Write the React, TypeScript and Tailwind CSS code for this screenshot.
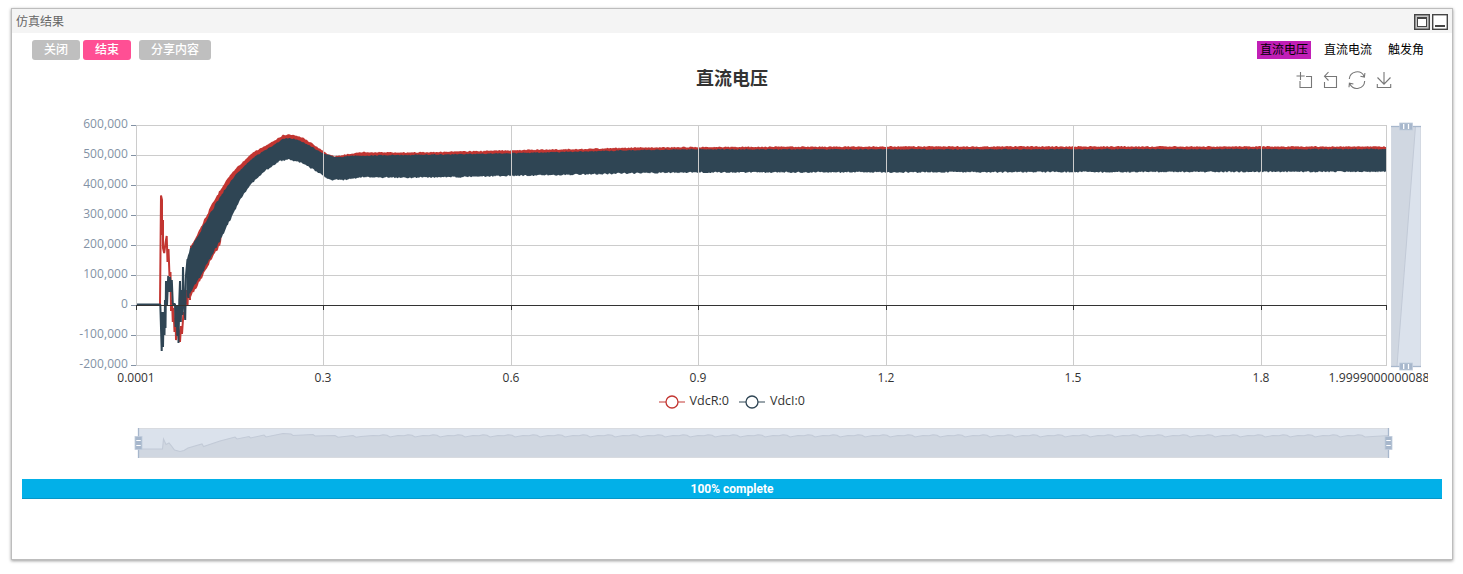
import React from "react";

type Point = [number, number];

const FONT = "font-['Open_Sans','Noto_Sans_CJK_SC',sans-serif]";

const redTop: Point[] = [
  [190, 247], [195.7, 237], [210.7, 207], [221.7, 187], [229.3, 176], [236.7, 167.5], [253.3, 152.3],
  [273.3, 141.5], [283, 135], [290, 134.3], [303, 137.5], [316.7, 146.5], [326.7, 153.5], [335, 156.5],
  [346.7, 154.3], [363, 152], [403, 152.5], [460, 151.5], [520, 150], [580, 149], [640, 147.5],
  [700, 147], [900, 146.5], [1386, 146.5],
];
const darkTop: Point[] = [
  [187, 259], [190, 249], [193.3, 244], [201.7, 229], [216.7, 202], [229.3, 183], [236.7, 173.5],
  [253.3, 157.7], [283, 139], [290, 138], [300, 140.3], [313, 147.5], [323, 153.5], [336.7, 157.3],
  [353, 155.7], [460, 154.2], [520, 153], [580, 151.5], [640, 150], [700, 149.3], [1386, 149],
];
const darkBottom: Point[] = [
  [187, 297], [191.7, 291], [200, 277], [211.7, 255], [220, 241], [229.3, 222], [240, 200], [250, 185],
  [263, 172.5], [280, 161], [290, 159.7], [303, 163], [320, 174], [330, 180], [343, 180], [363, 177.3],
  [403, 177.6], [460, 177], [520, 175.7], [580, 174.5], [640, 173], [700, 172.4], [1386, 171.7],
];

function sample(points: Point[], x: number): number {
  if (x <= points[0][0]) return points[0][1];
  for (let i = 1; i < points.length; i++) {
    const [x1, y1] = points[i];
    if (x <= x1) {
      const [x0, y0] = points[i - 1];
      return y0 + ((x - x0) / (x1 - x0)) * (y1 - y0);
    }
  }
  return points[points.length - 1][1];
}

function ripple(x: number, seed: number): number {
  const v = Math.sin(x * 12.9898 + seed * 78.233) * 43758.5453;
  return v - Math.floor(v) - 0.5;
}

function band(top: Point[], bottom: Point[], from: number, early: number, late: number, seed: number): string {
  const upper: string[] = [];
  const lower: string[] = [];
  for (let x = from; x <= 1386; x += 1) {
    const amp = x < 230 ? 2.4 : 1.1;
    upper.push(`${x},${(sample(top, x) + ripple(x, seed) * amp).toFixed(2)}`);
    const extra = x < 222 ? early : late;
    lower.unshift(`${x},${(sample(bottom, x) + extra + ripple(x, seed + 3) * (amp + 0.4)).toFixed(2)}`);
  }
  return [...upper, ...lower].join(" ");
}

const redBand = band(redTop, darkBottom, 190, 4, -3, 1);
const darkBand = band(darkTop, darkBottom, 187, 0, 0, 2);

function overview(): string {
  const pts = [
    "138,449", "162.5,449", "163.5,439", "166,444.5", "169,443", "171.5,446", "174.5,450", "180,451.5",
    "184,450.5", "188,448", "202,444", "203.5,446.5", "220,441", "235,437", "237,439", "249,436.5",
    "250.5,438", "264,435", "266,437", "283,433.5", "291,434", "293,435.5", "313,434.5", "315,436",
    "335,435.5", "338,437.3", "353,435.5", "356,437.2", "361,436.5",
  ];
  for (let x = 365; x + 25 < 1389; x += 25) {
    pts.push(`${x + 8},435.5`, `${x + 14},435.8`, `${x + 18},434.8`, `${x + 22},435.2`, `${x + 25},437`);
  }
  pts.push("1389,435.5");
  return pts.join(" ");
}
const overviewLine = overview();

const yLabels = ["600,000", "500,000", "400,000", "300,000", "200,000", "100,000", "0", "-100,000", "-200,000"];
const xTicks: { x: number; label: string }[] = [
  { x: 136.5, label: "0.0001" }, { x: 323.5, label: "0.3" }, { x: 511.5, label: "0.6" },
  { x: 698.5, label: "0.9" }, { x: 886.5, label: "1.2" }, { x: 1073.5, label: "1.5" },
  { x: 1261.5, label: "1.8" }, { x: 1386.5, label: "" },
];

function SideHandle({ x }: { x: number }) {
  return (
    <g>
      <path d={`M${x} 428V458`} stroke="#a7b7cc" strokeWidth="1.3" />
      <rect x={x - 3.5} y="436.5" width="7" height="13" fill="#a7b7cc" stroke="#c1cddd" strokeWidth="0.8" />
      <path d={`M${x - 2.2} 440.5h4.4M${x - 2.2} 445.5h4.4`} stroke="#fff" strokeWidth="1.2" />
    </g>
  );
}

function EndHandle({ y }: { y: number }) {
  return (
    <g>
      <path d={`M1391 ${y}H1421`} stroke="#a7b7cc" strokeWidth="1.3" />
      <rect x="1399.7" y={y - 3.5} width="12.8" height="7" fill="#a7b7cc" stroke="#c1cddd" strokeWidth="0.8" />
      <path d={`M1403.7 ${y - 2.5}v5M1408.5 ${y - 2.5}v5`} stroke="#fff" strokeWidth="1.3" />
    </g>
  );
}

function LegendMark({ x, color }: { x: number; color: string }) {
  return (
    <g stroke={color} fill="#fff">
      <path d={`M${x - 13} 402H${x + 13}`} strokeWidth="1.3" opacity="0.75" />
      <circle cx={x} cy="402" r="6" strokeWidth="1.3" />
    </g>
  );
}

function Chart() {
  return (
    <svg viewBox="36 60 1392 410" width="1392" height="410" className={`block ${FONT} text-[12px]`}>
      <text x="732" y="84.5" textAnchor="middle" fontSize="18" fontWeight="700" fill="#333">直流电压</text>

      <g fill="none" stroke="#777" strokeWidth="1.1">
        <path d="M1300.5 72v8M1296.5 76h8.2M1306 76.5h5.5v11h-11.5v-6.5" />
        <path d="M1328.5 72l-4 4.3 4 4.2M1324.5 76.5h12v11h-12v-5.5" />
        <path d="M1349.3 79a7.8 7.8 0 0 1 14.8-2.8M1364.7 81a7.8 7.8 0 0 1-14.8 3M1364.9 73l-.5 4-4-.7M1349 87.3l.4-4.2 4 .9" />
        <path d="M1384 72v12.2M1377.5 77.5l6.5 6.7 6.5-6.7M1377.3 84v3.5h13.4V84" />
      </g>

      <g stroke="#ccc" strokeWidth="1" shapeRendering="crispEdges">
        {yLabels.map((l, i) => (
          <path key={l} d={`M136 ${125.5 + i * 30}H1387`} />
        ))}
      </g>
      <g shapeRendering="crispEdges">
        {yLabels.map((l, i) => (
          <path key={l} d={`M131 ${125.5 + i * 30}h5`} stroke="#8392a5" />
        ))}
      </g>
      <g fill="#8392a5" textAnchor="end">
        {yLabels.map((l, i) => (
          <text key={l} x="128" y={128.3 + i * 30} className="tracking-[0.08px]">{l}</text>
        ))}
      </g>

      <g fill="none" stroke="#c23531" strokeWidth="2" strokeLinejoin="bevel">
        <path d="M137 305H160L161 195.5 162 200 162 235 163 220 163 248 164.2 253 165.5 243 166.7 236 167.5 262 168.5 249 169.5 276 170.5 272 171 311 172 300 172.8 322 173.5 308 174.5 332 175.5 318 176 340 178 325 180 342 181 326 182 334 183.5 312 184.5 318 186 290 187.5 306 189 262 190 300" />
      </g>
      <polygon points={redBand} fill="#c23531" />
      <path
        d="M137 304.5H160.3L161.7 351 162.2 312 163 347 163.7 312 164.5 335 165 300 165.5 328 166 281 167 306 168.2 276 169.3 292 170 277 171 292 171.8 280 172.8 304 175 304 175.6 327 176.5 306 177.3 336 178 306 178.5 343 179.3 300 180 281 180.8 322 181.6 290 182.4 315 183 267 184 300 185.2 320 186 275 187.5 259 188.5 298"
        fill="none" stroke="#2f4554" strokeWidth="2" strokeLinejoin="bevel"
      />
      <polygon points={darkBand} fill="#2f4554" />

      <g stroke="#ccc" strokeWidth="1" shapeRendering="crispEdges">
        {xTicks.map((t) => (
          <path key={t.x} d={`M${t.x} 125V366`} />
        ))}
      </g>
      <g stroke="#333" strokeWidth="1" shapeRendering="crispEdges">
        <path d="M136 305.5H1387" />
        {xTicks.map((t) => (
          <path key={t.x} d={`M${t.x} 305v5`} />
        ))}
      </g>
      <g fill="#333" textAnchor="middle">
        {xTicks.map((t) => (
          <text key={t.x} x={t.x - 0.5} y="382">{t.label}</text>
        ))}
      </g>
      <text x="1328.5" y="382" fill="#333" textLength="101" lengthAdjust="spacingAndGlyphs">1.9999000000088</text>

      <rect x="1391" y="126" width="30" height="240" fill="#dbe2ec" />
      <path d="M1391 126H1415.5L1397 366H1391Z" fill="#d0d7e1" />
      <path d="M1415.5 126L1397 366" stroke="#c2cad7" strokeWidth="1" />
      <path d="M1391.5 126V366M1420.5 126V366" stroke="#d3d9e2" />
      <EndHandle y={126.5} />
      <EndHandle y={366.5} />

      <LegendMark x={672} color="#c23531" />
      <text x="689.5" y="405" fill="#333" textLength="39.5" lengthAdjust="spacingAndGlyphs">VdcR:0</text>
      <LegendMark x={752} color="#2f4554" />
      <text x="770" y="405" fill="#333" textLength="35" lengthAdjust="spacingAndGlyphs">VdcI:0</text>

      <rect x="138" y="428" width="1251" height="30" fill="#dbe2ec" />
      <polygon points={`138,458 ${overviewLine} 1389,458`} fill="#d0d7e1" />
      <polyline points={overviewLine} fill="none" stroke="#c2cad7" strokeWidth="1.1" />
      <path d="M138 428.5H1389M138 457.5H1389" stroke="#d8dbe0" />
      <SideHandle x={138.5} />
      <SideHandle x={1388.5} />
    </svg>
  );
}

function WindowIcons() {
  return (
    <div className="flex gap-[2px]">
      <svg width="16" height="16" viewBox="0 0 16 16">
        <rect x="0.7" y="0.7" width="14.6" height="14.6" fill="#c4c4c4" stroke="#444" strokeWidth="1.4" />
        <rect x="3.5" y="3.5" width="9" height="9" fill="#fff" stroke="#444" />
        <path d="M3 4h10" stroke="#444" strokeWidth="2" />
      </svg>
      <svg width="16" height="16" viewBox="0 0 16 16">
        <rect x="0.7" y="0.7" width="14.6" height="14.6" fill="#fff" stroke="#444" strokeWidth="1.4" />
        <path d="M3 12h10" stroke="#444" strokeWidth="2" />
      </svg>
    </div>
  );
}

export default function App() {
  const button = "h-5 rounded-[3px] text-center text-[12px] leading-[18px] font-medium text-white";
  return (
    <div className={`h-[574px] w-[1463px] overflow-hidden bg-white pt-2 pl-[11px] ${FONT}`}>
      <div className="flex h-[552px] w-[1442px] flex-col border border-[#bdbdbd] bg-white shadow-[0_1px_3px_rgba(0,0,0,0.4)]">
        <header className="flex h-6 shrink-0 items-center justify-between bg-[#f4f4f4] pr-1 pl-1 text-[12px] text-[#666]">
          <span className="pt-0.5">仿真结果</span>
          <div className="pt-0.5"><WindowIcons /></div>
        </header>
        <div className="flex h-[27px] shrink-0 items-start justify-between pt-[7px] pr-[25px] pl-5">
          <div className="flex">
            <button className={`${button} w-12 bg-[#bfbfbf]`}>关闭</button>
            <button className={`${button} ml-[3px] w-12 bg-[#ff4f94]`}>结束</button>
            <button className={`${button} ml-2 w-[72px] bg-[#bfbfbf]`}>分享内容</button>
          </div>
          <nav className="mt-px flex gap-[10px] text-[12px] leading-[17px] text-black">
            <span className="h-[18px] bg-[#c11fb6] px-[3px]">直流电压</span>
            <span className="h-[18px] px-[3px]">直流电流</span>
            <span className="h-[18px] px-[3px]">触发角</span>
          </nav>
        </div>
        <div className="h-[410px] shrink-0 pl-6">
          <Chart />
        </div>
        <div className="mx-[10px] mt-[9px] h-5 border-b border-[#0696c7] bg-[#02b0e8] text-center font-['Roboto',sans-serif] text-[12px] leading-5 font-bold text-white">
          100% complete
        </div>
      </div>
    </div>
  );
}
